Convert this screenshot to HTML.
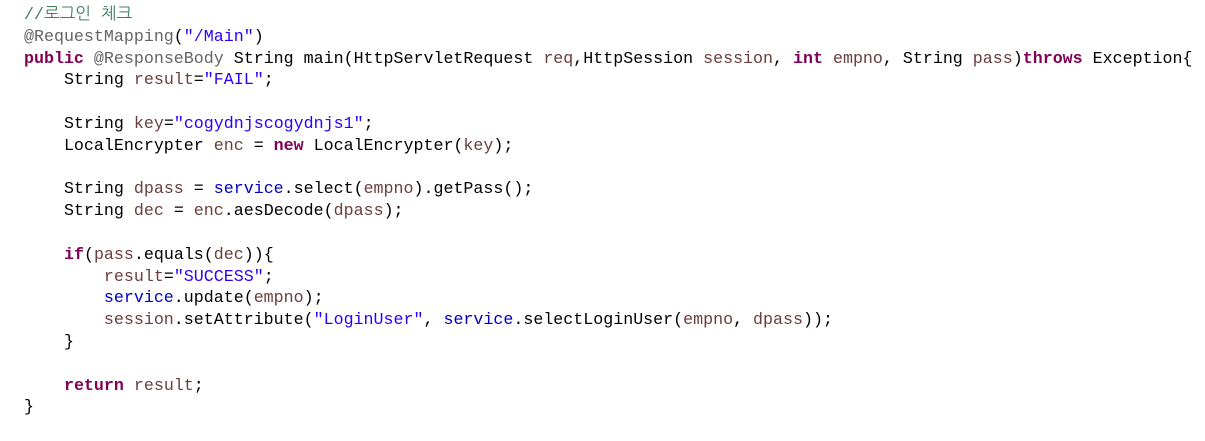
<!DOCTYPE html>
<html><head><meta charset="utf-8"><style>
html,body{margin:0;padding:0;background:#fff;width:1205px;height:441px;overflow:hidden}
pre{margin:0;padding:4px 0 0 24px;font-family:"Liberation Mono","NanumGothic",monospace;font-size:16.65px;line-height:21.8px;color:#000}
.c{color:#3F7F5F}.a{color:#646464}.k{color:#7F0055;font-weight:bold}.s{color:#2A00FF}.v{color:#6A3E3E}.f{color:#0000C0}
</style></head><body><pre><span class="c">//로그인 체크</span>
<span class="a">@RequestMapping</span>(<span class="s">"/Main"</span>)
<span class="k">public</span> <span class="a">@ResponseBody</span> String main(HttpServletRequest <span class="v">req</span>,HttpSession <span class="v">session</span>, <span class="k">int</span> <span class="v">empno</span>, String <span class="v">pass</span>)<span class="k">throws</span> Exception{
    String <span class="v">result</span>=<span class="s">"FAIL"</span>;

    String <span class="v">key</span>=<span class="s">"cogydnjscogydnjs1"</span>;
    LocalEncrypter <span class="v">enc</span> = <span class="k">new</span> LocalEncrypter(<span class="v">key</span>);

    String <span class="v">dpass</span> = <span class="f">service</span>.select(<span class="v">empno</span>).getPass();
    String <span class="v">dec</span> = <span class="v">enc</span>.aesDecode(<span class="v">dpass</span>);

    <span class="k">if</span>(<span class="v">pass</span>.equals(<span class="v">dec</span>)){
        <span class="v">result</span>=<span class="s">"SUCCESS"</span>;
        <span class="f">service</span>.update(<span class="v">empno</span>);
        <span class="v">session</span>.setAttribute(<span class="s">"LoginUser"</span>, <span class="f">service</span>.selectLoginUser(<span class="v">empno</span>, <span class="v">dpass</span>));
    }

    <span class="k">return</span> <span class="v">result</span>;
}</pre></body></html>
